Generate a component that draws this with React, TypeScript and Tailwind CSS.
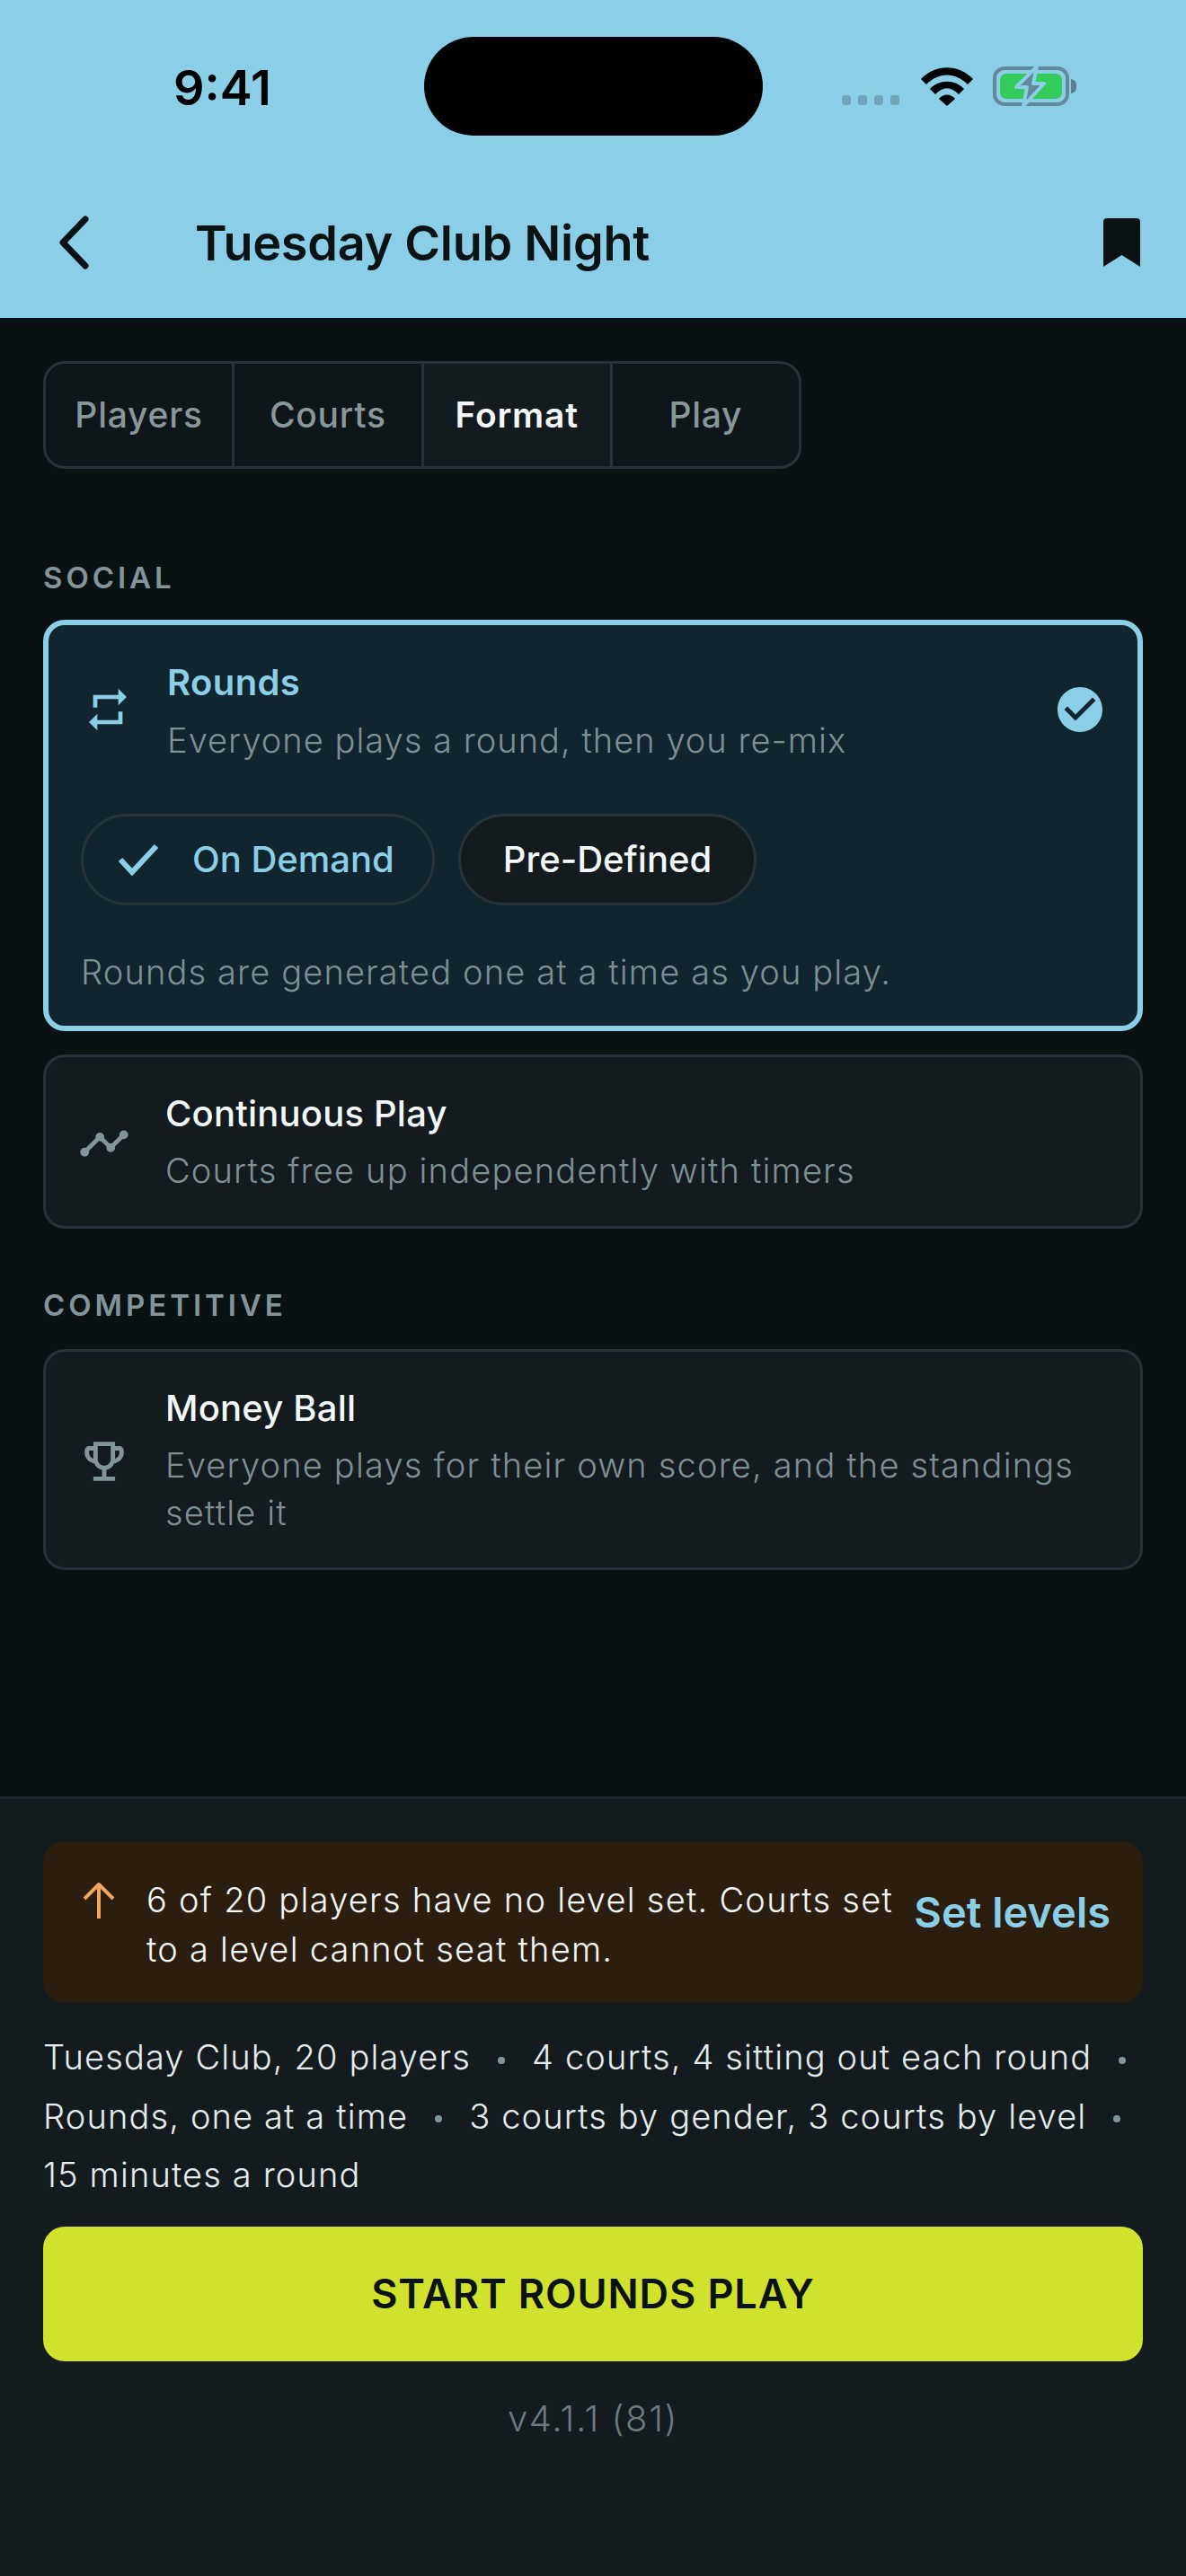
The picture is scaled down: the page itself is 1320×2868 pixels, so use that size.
import { MdCheckCircle, MdOutlineEmojiEvents, MdRepeat, MdTimeline } from "react-icons/md";

const tabs = ["Players", "Courts", "Format", "Play"];

function StatusBar() {
  return (
    <div className="relative h-[194px]">
      <span className="absolute left-[193px] top-[63px] text-[54px] leading-[70px] font-semibold text-black">9:41</span>
      <div className="absolute left-[472px] top-[41px] h-[110px] w-[377px] rounded-full bg-black" />
      <div className="absolute left-[937px] top-[106px] flex gap-[8px]">
        {[0, 1, 2, 3].map((i) => (
          <span key={i} className="h-[11px] w-[10px] rounded-[3px] bg-[#6fa5b9]" />
        ))}
      </div>
      <svg className="absolute left-[1025px] top-[75px]" width="58" height="44" viewBox="0 0 58 44">
        <path d="M0 13 C16 -4 42 -4 58 13 L52 19 C38 5 20 5 6 19 Z" fill="#000" />
        <path d="M10 24 C20 13 38 13 48 24 L42 30 C33 21 25 21 16 30 Z" fill="#000" />
        <path d="M20 35 C25 29 33 29 38 35 L29 43 Z" fill="#000" />
      </svg>
      <svg className="absolute left-[1105px] top-[73px]" width="95" height="46" viewBox="0 0 95 46">
        <rect x="2" y="3" width="81" height="40" rx="11" fill="none" stroke="#63889a" strokeWidth="4" />
        <rect x="8" y="9" width="69" height="28" rx="7" fill="#33cb5c" />
        <path d="M87 15 C92 16 93 19 93 23 C93 27 92 30 87 31 Z" fill="#5c7c8c" />
        <path d="M49 1 L26 24 L38 24 L34 45 L57 20 L45 20 Z" fill="#63889a" stroke="#8acfe7" strokeWidth="4" strokeLinejoin="round" />
      </svg>
    </div>
  );
}

function Header() {
  return (
    <div className="flex h-[160px] items-start bg-[#8acfe7]">
      <svg className="ml-[64px] mt-[46px]" width="36" height="60" viewBox="0 0 36 60" fill="none">
        <path d="M31 4 L6 30 L31 56" stroke="#0a1214" strokeWidth="7" strokeLinecap="round" strokeLinejoin="round" />
      </svg>
      <h1 className="ml-[117px] mt-[44px] flex-1 text-[54px] leading-[66px] font-semibold tracking-[-0.005em] text-[#0a1214]">Tuesday Club Night</h1>
      <svg className="mr-[51px] mt-[49px]" width="41" height="54" viewBox="0 0 41 54">
        <path d="M0 4 Q0 0 4 0 H37 Q41 0 41 4 V54 L20.5 41 L0 54 Z" fill="#0a1214" />
      </svg>
    </div>
  );
}

function Tabs() {
  return (
    <div className="flex h-[120px] w-[844px] overflow-hidden rounded-[24px] border-[3px] border-[#28323a] bg-[#0f1619]">
      {tabs.map((t, i) => (
        <div
          key={t}
          className={`flex flex-1 items-center justify-center text-[39px] font-medium tracking-[0.02em] ${i > 0 ? "border-l-[3px] border-[#28323a]" : ""} ${t === "Format" ? "bg-[#131b1f] font-semibold text-[#f2f7f7]" : "text-[#89979a]"}`}
        >
          {t}
        </div>
      ))}
    </div>
  );
}

function SectionLabel({ children, className }: { children: string; className: string }) {
  return <div className={`text-[33px] leading-[40px] font-semibold tracking-[0.12em] text-[#82959a] ${className}`}>{children}</div>;
}

function RoundsCard() {
  return (
    <div className="mt-[27px] h-[458px] rounded-[24px] border-[6px] border-[#8acfe7] bg-[#10252d] px-[36px] pt-[39px]">
      <div className="flex items-start">
        <MdRepeat className="ml-[2px] mt-[27px] shrink-0 text-[#8acfe7]" size={56} />
        <div className="ml-[38px] flex-1">
          <div className="text-[40px] leading-[50px] font-semibold tracking-[0.01em] text-[#8acfe7]">Rounds</div>
          <div className="mt-[14px] text-[38px] leading-[50px] font-light tracking-[0.027em] text-[#7f9095]">Everyone plays a round, then you re-mix</div>
        </div>
        <MdCheckCircle className="-mr-[2px] mt-[25px] shrink-0 text-[#8acfe7]" size={60} />
      </div>
      <div className="mt-[57px] flex gap-[26px]">
        <div className="flex h-[102px] w-[394px] items-center rounded-full border-[3px] border-[#283338] pl-[39px]">
          <svg width="44" height="36" viewBox="0 0 44 36" fill="none">
            <path d="M2 18 L15 32 L42 3" stroke="#8acfe7" strokeWidth="6" />
          </svg>
          <span className="ml-[38px] text-[40px] font-medium text-[#8acfe7]">On Demand</span>
        </div>
        <div className="flex h-[102px] w-[332px] items-center justify-center rounded-full border-[3px] border-[#283338] bg-[#141b1f] text-[40px] font-medium text-[#f2f7f7]">
          Pre-Defined
        </div>
      </div>
      <div className="mt-[49px] text-[38px] leading-[50px] font-light tracking-[0.03em] text-[#7f9095]">Rounds are generated one at a time as you play.</div>
    </div>
  );
}

function OptionCard({ icon, title, desc, className }: { icon: React.ReactNode; title: string; desc: string; className: string }) {
  return (
    <div className={`flex items-center rounded-[24px] border-[3px] border-[#28323a] bg-[#131b1f] pl-[36px] pr-[36px] ${className}`}>
      <div className="w-[97px] shrink-0">{icon}</div>
      <div className="flex-1">
        <div className="text-[40px] leading-[50px] font-medium tracking-[0.005em] text-[#f2f7f7]">{title}</div>
        <div className="mt-[12px] text-[38px] leading-[53px] font-light tracking-[0.031em] text-[#7f9095]">{desc}</div>
      </div>
    </div>
  );
}

function Dot({ className }: { className: string }) {
  return <span className={`inline-block h-[8px] w-[8px] rounded-full bg-[#82959a] align-middle ${className}`} />;
}

export default function App() {
  return (
    <div className="flex h-[2868px] w-[1320px] flex-col bg-[#091113] [font-family:Inter,sans-serif]">
      <div className="bg-[#8acfe7]">
        <StatusBar />
        <Header />
      </div>
      <div className="flex-1 px-[48px] pt-[48px]">
        <Tabs />
        <SectionLabel className="mt-[101px]">SOCIAL</SectionLabel>
        <RoundsCard />
        <OptionCard
          className="mt-[26px] h-[194px] pt-[3px]"
          icon={<MdTimeline className="text-[#82959a]" size={58} />}
          title="Continuous Play"
          desc="Courts free up independently with timers"
        />
        <SectionLabel className="mt-[65px]">COMPETITIVE</SectionLabel>
        <OptionCard
          className="mt-[29px] h-[246px] pt-[3px]"
          icon={<MdOutlineEmojiEvents className="text-[#82959a]" size={58} />}
          title="Money Ball"
          desc="Everyone plays for their own score, and the standings settle it"
        />
      </div>
      <div className="h-[868px] border-t-[3px] border-[#1c262b] bg-[#131b1f] px-[48px] pt-[47px]">
        <div className="flex h-[180px] items-center rounded-[24px] bg-[#2c1e0e] pl-[43px] pr-[36px]">
          <svg className="mb-[48px] shrink-0" width="38" height="42" viewBox="0 0 38 42" fill="none">
            <path d="M19 41 V3 M3 19 L19 3 L35 19" stroke="#f0a65c" strokeWidth="4" strokeLinejoin="round" />
          </svg>
          <div className="ml-[34px] mt-[6px] flex-1 text-[38px] leading-[55px] font-light tracking-[0.033em] text-[#f2f7f7]">
            6 of 20 players have no level set. Courts set to a level cannot seat them.
          </div>
          <div className="mb-[22px] ml-[16px] shrink-0 text-[47px] font-semibold text-[#8acfe7]">Set levels</div>
        </div>
        <div className="mt-[28px] text-[38px] leading-[65.5px] font-light tracking-[0.03em] whitespace-nowrap text-[#e4ecec]">
          <div>
            Tuesday Club, 20 players
            <Dot className="mx-[30px]" />4 courts, 4 sitting out each round
            <Dot className="ml-[30px]" />
          </div>
          <div>
            Rounds, one at a time
            <Dot className="mx-[30px]" />3 courts by gender, 3 courts by level
            <Dot className="ml-[30px]" />
          </div>
          <div>15 minutes a round</div>
        </div>
        <div className="mt-[24px] flex h-[150px] items-center justify-center rounded-[24px] bg-[#d1e22c] text-[45px] font-semibold tracking-[0.02em] text-[#0a1214]">
          START ROUNDS PLAY
        </div>
        <div className="mt-[44px] text-center text-[40px] leading-[40px] font-light tracking-[0.04em] text-[#6b7a7f]">v4.1.1 (81)</div>
      </div>
    </div>
  );
}
